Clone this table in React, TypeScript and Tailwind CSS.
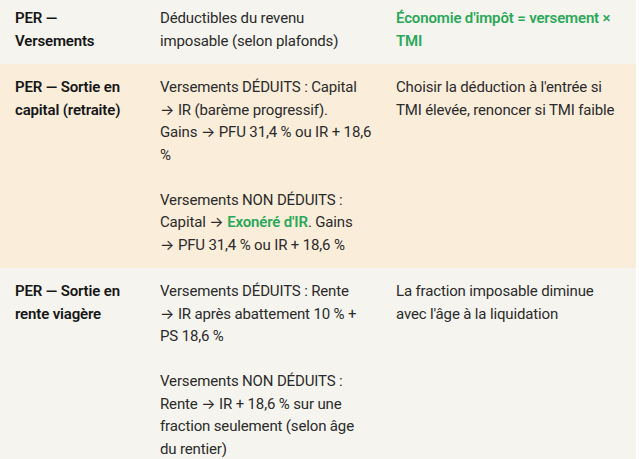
import React from "react";

const G = ({ children }: { children: React.ReactNode }) => (
  <span className="font-semibold text-[#2ba85a]">{children}</span>
);

const A = () => <span className="font-['Inter',sans-serif] tracking-normal">→</span>;

type Row = {
  bg: string;
  pt: string;
  title: React.ReactNode;
  mid: React.ReactNode[][];
  right: React.ReactNode;
};

const rows: Row[] = [
  {
    bg: "bg-[#f5f4ee]",
    pt: "pt-[7px]",
    title: "PER — Versements",
    mid: [["Déductibles du revenu", "imposable (selon plafonds)"]],
    right: <G>Économie d'impôt = versement × TMI</G>,
  },
  {
    bg: "bg-[#faedda]",
    pt: "pt-[12px]",
    title: "PER — Sortie en capital (retraite)",
    mid: [
      [
        "Versements DÉDUITS : Capital",
        <><A /> IR (barème progressif).</>,
        <>Gains <A /> PFU 31,4 % ou IR + 18,6</>,
        "%",
      ],
      [
        "Versements NON DÉDUITS :",
        <>Capital <A /> <G>Exonéré d'IR</G>. Gains</>,
        <><A /> PFU 31,4 % ou IR + 18,6 %</>,
      ],
    ],
    right: "Choisir la déduction à l'entrée si TMI élevée, renoncer si TMI faible",
  },
  {
    bg: "bg-[#f5f4ee]",
    pt: "pt-[12px]",
    title: "PER — Sortie en rente viagère",
    mid: [
      [
        "Versements DÉDUITS : Rente",
        <><A /> IR après abattement 10 % +</>,
        "PS 18,6 %",
      ],
      [
        "Versements NON DÉDUITS :",
        <>Rente <A /> IR + 18,6 % sur une</>,
        "fraction seulement (selon âge",
        "du rentier)",
      ],
    ],
    right: "La fraction imposable diminue avec l'âge à la liquidation",
  },
];

export default function App() {
  return (
    <div className="w-[639px] h-[459px] overflow-hidden bg-white font-['Roboto','Liberation_Sans',sans-serif]">
      <div className="w-[636px] text-[15px] leading-[22.5px] tracking-[-0.15px] text-[#2b2b2b]">
        {rows.map((r, i) => (
          <div key={i} className={`grid grid-cols-[145px_236px_255px] ${r.bg}`}>
            <div className={`px-[15px] ${r.pt} pb-[12px] font-semibold text-[#161616]`}>{r.title}</div>
            <div className={`pl-[15px] pr-[13px] ${r.pt} pb-[12px] flex flex-col gap-[22.5px]`}>
              {r.mid.map((para, j) => (
                <p key={j} className="flex flex-col">
                  {para.map((line, k) => (
                    <span key={k} className="whitespace-nowrap">
                      {line}
                    </span>
                  ))}
                </p>
              ))}
            </div>
            <div className={`px-[15px] ${r.pt} pb-[12px]`}>{r.right}</div>
          </div>
        ))}
      </div>
    </div>
  );
}
